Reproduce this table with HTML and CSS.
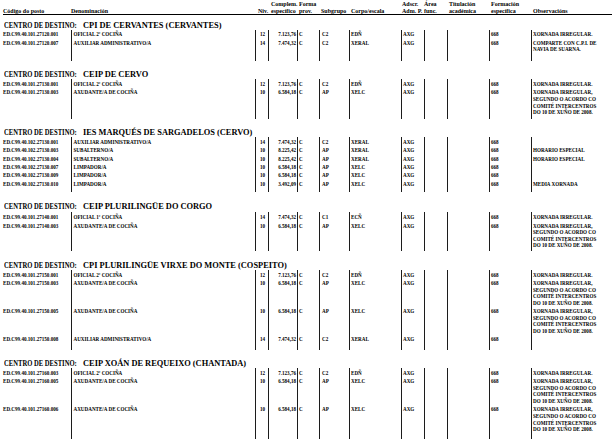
FILE: index.html
```html
<!DOCTYPE html>
<html lang="gl">
<head>
<meta charset="utf-8">
<title>Relación de postos</title>
<link rel="stylesheet" href="styles.css">
</head>
<body>
<div class="page">
  <div class="grid head">
    <div>Código do posto</div>
    <div>Denominación</div>
    <div class="h-niv">Niv.</div>
    <div class="h-cmp">Complem.<br>específico</div>
    <div>Forma<br>prov.</div>
    <div>Subgrupo</div>
    <div>Corpo/escala</div>
    <div class="h-tight">Adscr.<br>Adm. P.</div>
    <div class="h-zero">Área<br>func.</div>
    <div>Titulación<br>académica</div>
    <div>Formación<br>específica</div>
    <div>Observacións</div>
  </div>

  <section class="sec first tail-8">
    <h2 class="sec-title"><span class="lbl">CENTRO DE DESTINO:</span><span>CPI DE CERVANTES (CERVANTES)</span></h2>
    <div class="grid row"><div>ED.C99.40.101.27120.001</div><div>OFICIAL 2ª COCIÑA</div><div class="niv">12</div><div class="cmp">7.123,76</div><div>C</div><div>C2</div><div>EDÑ</div><div>AXG</div><div></div><div></div><div>668</div><div>XORNADA IRREGULAR.</div></div>
    <div class="grid row"><div>ED.C99.40.101.27120.007</div><div>AUXILIAR ADMINISTRATIVO/A</div><div class="niv">14</div><div class="cmp">7.474,32</div><div>C</div><div>C2</div><div>XERAL</div><div>AXG</div><div></div><div></div><div>668</div><div>COMPARTE CON C.P.I. DE<br>NAVIA DE SUARNA.</div></div>
  </section>

  <section class="sec tail-3">
    <h2 class="sec-title"><span class="lbl">CENTRO DE DESTINO:</span><span>CEIP DE CERVO</span></h2>
    <div class="grid row"><div>ED.C99.40.101.27130.001</div><div>OFICIAL 2ª COCIÑA</div><div class="niv">12</div><div class="cmp">7.123,76</div><div>C</div><div>C2</div><div>EDÑ</div><div>AXG</div><div></div><div></div><div>668</div><div>XORNADA IRREGULAR.</div></div>
    <div class="grid row"><div>ED.C99.40.101.27130.003</div><div>AXUDANTE/A DE COCIÑA</div><div class="niv">10</div><div class="cmp">6.584,18</div><div>C</div><div>AP</div><div>XELC</div><div>AXG</div><div></div><div></div><div>668</div><div>XORNADA IRREGULAR,<br>SEGUNDO O ACORDO CO<br>COMITÉ INTERCENTROS<br>DO 10 DE XUÑO DE 2008.</div></div>
  </section>

  <section class="sec tail-5">
    <h2 class="sec-title"><span class="lbl">CENTRO DE DESTINO:</span><span>IES MARQUÉS DE SARGADELOS (CERVO)</span></h2>
    <div class="grid row"><div>ED.C99.40.102.27130.001</div><div>AUXILIAR ADMINISTRATIVO/A</div><div class="niv">14</div><div class="cmp">7.474,32</div><div>C</div><div>C2</div><div>XERAL</div><div>AXG</div><div></div><div></div><div>668</div><div></div></div>
    <div class="grid row"><div>ED.C99.40.102.27130.003</div><div>SUBALTERNO/A</div><div class="niv">10</div><div class="cmp">8.225,42</div><div>C</div><div>AP</div><div>XERAL</div><div>AXG</div><div></div><div></div><div>668</div><div>HORARIO ESPECIAL</div></div>
    <div class="grid row"><div>ED.C99.40.102.27130.004</div><div>SUBALTERNO/A</div><div class="niv">10</div><div class="cmp">8.225,42</div><div>C</div><div>AP</div><div>XERAL</div><div>AXG</div><div></div><div></div><div>668</div><div>HORARIO ESPECIAL</div></div>
    <div class="grid row"><div>ED.C99.40.102.27130.007</div><div>LIMPADOR/A</div><div class="niv">10</div><div class="cmp">6.584,18</div><div>C</div><div>AP</div><div>XELC</div><div>AXG</div><div></div><div></div><div>668</div><div></div></div>
    <div class="grid row"><div>ED.C99.40.102.27130.009</div><div>LIMPADOR/A</div><div class="niv">10</div><div class="cmp">6.584,18</div><div>C</div><div>AP</div><div>XELC</div><div>AXG</div><div></div><div></div><div>668</div><div></div></div>
    <div class="grid row"><div>ED.C99.40.102.27130.010</div><div>LIMPADOR/A</div><div class="niv">10</div><div class="cmp">3.492,09</div><div>C</div><div>AP</div><div>XELC</div><div>AXG</div><div></div><div></div><div>668</div><div>MEDIA XORNADA</div></div>
  </section>

  <section class="sec tail-4 gap-wide">
    <h2 class="sec-title"><span class="lbl">CENTRO DE DESTINO:</span><span>CEIP PLURILINGÜE DO CORGO</span></h2>
    <div class="grid row"><div>ED.C99.40.101.27140.001</div><div>OFICIAL 1ª COCIÑA</div><div class="niv">14</div><div class="cmp">7.474,32</div><div>C</div><div>C1</div><div>ECÑ</div><div>AXG</div><div></div><div></div><div>668</div><div>XORNADA IRREGULAR.</div></div>
    <div class="grid row"><div>ED.C99.40.101.27140.003</div><div>AXUDANTE/A DE COCIÑA</div><div class="niv">10</div><div class="cmp">6.584,18</div><div>C</div><div>AP</div><div>XELC</div><div>AXG</div><div></div><div></div><div>668</div><div>XORNADA IRREGULAR,<br>SEGUNDO O ACORDO CO<br>COMITÉ INTERCENTROS<br>DO 10 DE XUÑO DE 2008.</div></div>
  </section>

  <section class="sec tail-7">
    <h2 class="sec-title"><span class="lbl">CENTRO DE DESTINO:</span><span>CPI PLURILINGÜE VIRXE DO MONTE (COSPEITO)</span></h2>
    <div class="grid row"><div>ED.C99.40.101.27150.001</div><div>OFICIAL 2ª COCIÑA</div><div class="niv">12</div><div class="cmp">7.123,76</div><div>C</div><div>C2</div><div>EDÑ</div><div>AXG</div><div></div><div></div><div>668</div><div>XORNADA IRREGULAR.</div></div>
    <div class="grid row"><div>ED.C99.40.101.27150.003</div><div>AXUDANTE/A DE COCIÑA</div><div class="niv">10</div><div class="cmp">6.584,18</div><div>C</div><div>AP</div><div>XELC</div><div>AXG</div><div></div><div></div><div>668</div><div>XORNADA IRREGULAR,<br>SEGUNDO O ACORDO CO<br>COMITÉ INTERCENTROS<br>DO 10 DE XUÑO DE 2008.</div></div>
    <div class="grid row"><div>ED.C99.40.101.27150.005</div><div>AXUDANTE/A DE COCIÑA</div><div class="niv">10</div><div class="cmp">6.584,18</div><div>C</div><div>AP</div><div>XELC</div><div>AXG</div><div></div><div></div><div>668</div><div>XORNADA IRREGULAR,<br>SEGUNDO O ACORDO CO<br>COMITÉ INTERCENTROS<br>DO 10 DE XUÑO DE 2008.</div></div>
    <div class="grid row"><div>ED.C99.40.101.27150.008</div><div>AUXILIAR ADMINISTRATIVO/A</div><div class="niv">14</div><div class="cmp">7.474,32</div><div>C</div><div>C2</div><div>XERAL</div><div>AXG</div><div></div><div></div><div>668</div><div></div></div>
  </section>

  <section class="sec tail-9">
    <h2 class="sec-title"><span class="lbl">CENTRO DE DESTINO:</span><span>CEIP XOÁN DE REQUEIXO (CHANTADA)</span></h2>
    <div class="grid row"><div>ED.C99.40.101.27160.003</div><div>OFICIAL 2ª COCIÑA</div><div class="niv">12</div><div class="cmp">7.123,76</div><div>C</div><div>C2</div><div>EDÑ</div><div>AXG</div><div></div><div></div><div>668</div><div>XORNADA IRREGULAR.</div></div>
    <div class="grid row"><div>ED.C99.40.101.27160.005</div><div>AXUDANTE/A DE COCIÑA</div><div class="niv">10</div><div class="cmp">6.584,18</div><div>C</div><div>AP</div><div>XELC</div><div>AXG</div><div></div><div></div><div>668</div><div>XORNADA IRREGULAR,<br>SEGUNDO O ACORDO CO<br>COMITÉ INTERCENTROS<br>DO 10 DE XUÑO DE 2008.</div></div>
    <div class="grid row"><div>ED.C99.40.101.27160.006</div><div>AXUDANTE/A DE COCIÑA</div><div class="niv">10</div><div class="cmp">6.584,18</div><div>C</div><div>AP</div><div>XELC</div><div>AXG</div><div></div><div></div><div>668</div><div>XORNADA IRREGULAR,<br>SEGUNDO O ACORDO CO<br>COMITÉ INTERCENTROS<br>DO 10 DE XUÑO DE 2008.</div></div>
  </section>
</div>
</body>
</html>
```

FILE: styles.css
```css
* {
  box-sizing: border-box;
  margin: 0;
  padding: 0;
}

html,
body {
  background: #fff;
}

body {
  width: 615px;
  height: 439px;
  overflow: hidden;
  font-family: "Liberation Serif", "Times New Roman", serif;
  font-weight: bold;
  color: #000;
}

.page {
  padding-left: 3px;
  width: 612px;
}

.grid {
  display: grid;
  grid-template-columns: 68px 184px 13px 29px 22px 30px 52px 23px 23px 42px 42px 77px;
}

/* column header */
.head {
  height: 15px;
  border-bottom: 1px solid #000;
  font-size: 6px;
  line-height: 6.5px;
  align-items: end;
  white-space: nowrap;
}

.head > div {
  padding-left: 2px;
}

.head > div:first-child,
.head > div:nth-child(2),
.head .h-zero {
  padding-left: 0;
}

.head .h-niv,
.head .h-cmp {
  padding-left: 3px;
}

.head .h-tight {
  padding-left: 1px;
}

/* section heading */
.sec-title {
  display: flex;
  font-size: 8.4px;
  line-height: 9px;
  font-weight: bold;
  margin-top: 9.5px;
  padding-left: 1px;
  white-space: nowrap;
}

.sec.first .sec-title {
  margin-top: 5.5px;
}

.sec.gap-wide .sec-title {
  margin-bottom: 1.5px;
}

.sec-title .lbl {
  display: inline-block;
  width: 79px;
  transform: scaleX(0.79);
  transform-origin: 0 50%;
}

/* data rows */
.row {
  font-size: 5.1px;
  line-height: 6.6px;
  white-space: nowrap;
}

.row > div {
  padding-top: 1.7px;
  min-height: 8.4px;
}

.row > div + div {
  border-left: 1px solid #1c1c1c;
  padding-left: 1px;
}

.row > div:nth-child(2) {
  padding-left: 1.5px;
}

.row > div:nth-child(6) {
  padding-left: 2px;
}

.row .niv {
  text-align: center;
}

.row .cmp {
  text-align: right;
  padding-right: 1px;
}

.tail-3 .row:last-child > div { padding-bottom: 3px; }
.tail-4 .row:last-child > div { padding-bottom: 2.5px; }
.tail-5 .row:last-child > div { padding-bottom: 5px; }
.tail-7 .row:last-child > div { padding-bottom: 7px; }
.tail-8 .row:last-child > div { padding-bottom: 8px; }
.tail-9 .row:last-child > div { padding-bottom: 9px; }
```
